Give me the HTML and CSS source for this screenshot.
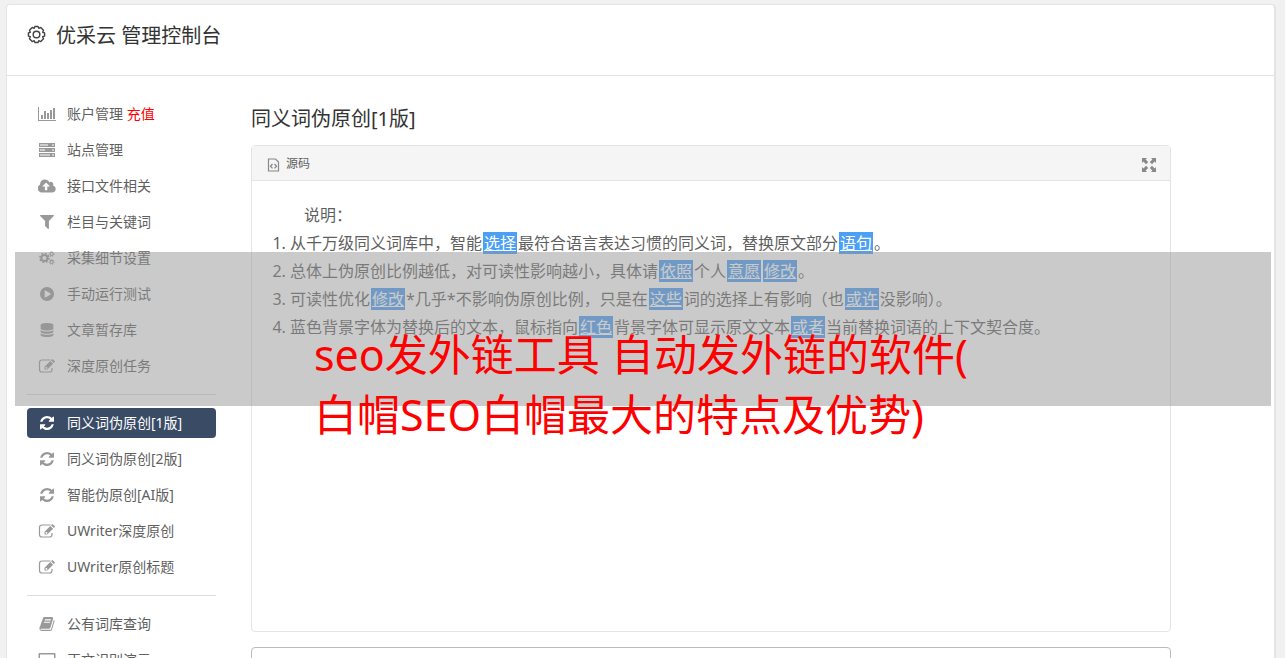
FILE: index.html
```html
<!DOCTYPE html>
<html lang="zh-CN">

<head>
    <meta charset="UTF-8">
    <meta name="viewport" content="width=device-width, initial-scale=1.0">
    <title>优采云 管理控制台</title>
    <link rel="stylesheet" href="styles.css">
</head>

<body>
    <!-- 图标 -->
    <svg class="sprite" aria-hidden="true">
        <symbol id="i-gear" viewBox="0 0 20 20">
            <path d="M8.300 1.500h3.400l.7 2 2.100-.9 2.900 2.900-.9 2.100 2 .7v3.400l-2 .7.9 2.100-2.900 2.900-2.100-.9-.7 2H8.300l-.7-2-2.100.9-2.900-2.900.9-2.100-2-.7V8.300l2-.7-.9-2.100 2.900-2.900 2.100.9z" fill="none" stroke="currentColor" stroke-width="1.500" stroke-linejoin="round"/>
            <circle cx="10" cy="10" r="3.500" fill="none" stroke="currentColor" stroke-width="1.500"/>
        </symbol>
        <symbol id="i-chart" viewBox="0 0 18 14">
            <path d="M0 0h1v13h17v1H0zM3 8h2v4H3zM6 4h2v8H6zM9 6h2v6H9zM12 3h2v9h-2zM15 1h2v11h-2z"/>
        </symbol>
        <symbol id="i-server" viewBox="0 0 18 14">
            <path fill-rule="evenodd" d="M1 0h16v4H1zM1 5h16v4H1zM1 10h16v4H1zM2 1.500v1h8v-1zM2 6.500v1h5v-1zM2 11.500v1h10v-1zM14 1.500v1h2v-1zM14 6.500v1h2v-1zM14 11.500v1h2v-1z"/>
        </symbol>
        <symbol id="i-cloud" viewBox="-32 0 1920 1408">
            <path d="M1216 736q0-14-9-23l-352-352q-9-9-23-9t-23 9l-351 351q-10 12-10 24 0 14 9 23t23 9h224v352q0 13 9.500 22.500t22.500 9.500h192q13 0 22.500-9.500t9.500-22.500v-352h224q13 0 22.500-9.500t9.500-22.500zm640 288q0 159-112.500 271.500t-271.500 112.500h-1088q-185 0-316.500-131.500t-131.500-316.500q0-130 70-240t188-165q-2-30-2-43 0-212 150-362t362-150q156 0 285.500 87t188.500 231q71-62 166-62 106 0 181 75t75 181q0 76-41 138 130 31 213.500 135.500t83.500 238.500z"/>
        </symbol>
        <symbol id="i-filter" viewBox="0 0 1408 1408">
            <path d="M1403 39q17 41-14 70l-493 493v742q0 42-39 59-13 5-25 5-27 0-45-19l-256-256q-19-19-19-45v-486l-493-493q-31-29-14-70 17-39 59-39h1280q42 0 59 39z"/>
        </symbol>
        <symbol id="i-cogs" viewBox="0 0 18 16">
            <g fill="none" stroke="currentColor">
                <circle cx="6" cy="8" r="3.500" stroke-width="2.400"/>
                <circle cx="6" cy="8" r="5.200" stroke-width="1.800" stroke-dasharray="2.040 2.040"/>
                <circle cx="14.300" cy="3.500" r="1.800" stroke-width="1.200"/>
                <circle cx="14.300" cy="3.500" r="2.800" stroke-width="1" stroke-dasharray="1.260 1.260"/>
                <circle cx="14.300" cy="12.500" r="1.800" stroke-width="1.200"/>
                <circle cx="14.300" cy="12.500" r="2.800" stroke-width="1" stroke-dasharray="1.260 1.260"/>
            </g>
        </symbol>
        <symbol id="i-play" viewBox="0 0 1536 1536">
            <path d="M768 0q209 0 385.500 103t279.500 279.500 103 385.500-103 385.500-279.500 279.500-385.500 103-385.500-103-279.500-279.500-103-385.500 103-385.500 279.500-279.500 385.500-103zm384 823q32-18 32-55t-32-55l-544-320q-31-19-64-1-32 19-32 56v640q0 37 32 56 16 8 32 8 17 0 32-9z"/>
        </symbol>
        <symbol id="i-database" viewBox="0 0 1536 1664">
            <path d="M768 640q237 0 443-43t325-127v170q0 69-103 128t-280 93.500-385 34.500-385-34.500-280-93.500-103-128v-170q119 84 325 127t443 43zm0 768q237 0 443-43t325-127v170q0 69-103 128t-280 93.500-385 34.500-385-34.500-280-93.500-103-128v-170q119 84 325 127t443 43zm0-384q237 0 443-43t325-127v170q0 69-103 128t-280 93.500-385 34.500-385-34.500-280-93.500-103-128v-170q119 84 325 127t443 43zm0-1024q208 0 385 34.500t280 93.500 103 128v128q0 69-103 128t-280 93.500-385 34.500-385-34.500-280-93.500-103-128v-128q0-69 103-128t280-93.500 385-34.500z"/>
        </symbol>
        <symbol id="i-edit" viewBox="0 0 18 14">
            <path d="M12.500 1H4Q1.500 1 1.500 3.500v7Q1.500 13 4 13h7.500q2.500 0 2.500-2.500V9" fill="none" stroke="currentColor" stroke-width="1.200"/>
            <path fill-rule="evenodd" d="M6.500 10.500V7.700L12.300 1.900l2.800 2.800-5.800 5.800zM7.400 8.500v.7h.7v.7h.7l.8-.8-1.400-1.400zM13 1.200l.8-.8q.6-.6 1.200 0l1.600 1.600q.6.600 0 1.200l-.8.8z"/>
        </symbol>
        <symbol id="i-refresh" viewBox="0 0 1536 1536">
            <path d="M1511 928q0 5-1 7-64 268-268 434.500t-478 166.500q-146 0-282.500-55t-243.500-157l-129 129q-19 19-45 19t-45-19-19-45v-448q0-26 19-45t45-19h448q26 0 45 19t19 45-19 45l-137 137q71 66 161 102t187 36q134 0 250-65t186-179q11-17 53-117 8-23 30-23h192q13 0 22.500 9.500t9.500 22.500zm25-800v448q0 26-19 45t-45 19h-448q-26 0-45-19t-19-45 19-45l138-138q-148-137-349-137-134 0-250 65t-186 179q-11 17-53 117-8 23-30 23h-199q-13 0-22.500-9.500t-9.500-22.500v-7q65-268 270-434.500t480-166.500q146 0 284 55.500t245 156.500l130-129q19-19 45-19t45 19 19 45z"/>
        </symbol>
        <symbol id="i-book" viewBox="0 128 1664 1536">
            <path d="M1639 478q40 57 18 129l-275 906q-19 64-76.500 107.500t-122.500 43.500h-923q-77 0-148.500-53.500t-99.500-131.500q-24-67-2-127 0-4 3-27t4-37q1-8-3-21.500t-3-19.500q2-11 8-21t16.500-23.500 16.500-23.500q23-38 45-91.500t30-91.500q3-10 .5-30t-.5-28q3-11 17-28t17-23q21-36 42-92t25-90q1-9-2.500-32t.5-28q4-13 22-30.500t22-22.500q19-26 42.500-84.500t27.500-96.500q1-8-3-25.500t-2-26.500q2-8 9-18t18-23 17-21q8-12 16.500-30.500t15-35 16-36 19.500-32 26.500-23.500 36-11.500 47.500 5.500l-1 3q38-9 51-9h761q74 0 114 56t18 130l-274 906q-36 119-71.500 153.500t-128.500 34.500h-869q-27 0-38 15-11 16-1 43 24 70 144 70h923q29 0 56-15.500t35-41.500l300-987q7-22 5-57 38 15 59 43zm-1064 2q-4 13 2 22.500t20 9.500h608q13 0 25.500-9.500t16.500-22.500l21-64q4-13-2-22.500t-20-9.500h-608q-13 0-25.500 9.500t-16.500 22.500zm-83 256q-4 13 2 22.500t20 9.500h608q13 0 25.500-9.500t16.500-22.500l21-64q4-13-2-22.500t-20-9.500h-608q-13 0-25.500 9.500t-16.500 22.500z"/>
        </symbol>
        <symbol id="i-laptop" viewBox="0 0 18 14">
            <path fill-rule="evenodd" d="M1.500 0h15q1 0 1 1v10q0 1-1 1h-15q-1 0-1-1V1q0-1 1-1zM2 1.400v9h14v-9zM0 13h18v1H0z"/>
        </symbol>
        <symbol id="i-source" viewBox="0 0 12 14">
            <path d="M1 1h7l3 3v9H1z" fill="none" stroke="currentColor" stroke-width="1.200"/>
            <path d="M5 6L3 8.200 5 10.400M7 6l2 2.200-2 2.200" fill="none" stroke="currentColor" stroke-width="1.300"/>
        </symbol>
        <symbol id="i-expand" viewBox="0 0 14 14">
            <path d="M0 0h5L3.600 1.400 6.200 4 4 6.200 1.400 3.600 0 5zM14 0v5l-1.400-1.400L10 6.200 7.800 4l2.600-2.600L9 0zM0 14V9l1.400 1.400L4 7.800 6.200 10l-2.600 2.600L5 14zM14 14H9l1.400-1.400L7.800 10 10 7.800l2.600 2.600L14 9z"/>
        </symbol>
    </svg>

    <div class="container">
        <header class="header">
            <svg class="icon icon-gear"><use href="#i-gear"/></svg>
            <h1>优采云 管理控制台</h1>
        </header>

        <div class="content">
            <nav class="sidebar">
                <ul>
                    <li><a href="#"><svg class="icon"><use href="#i-chart"/></svg>账户管理 <span class="recharge">充值</span></a></li>
                    <li><a href="#"><svg class="icon"><use href="#i-server"/></svg>站点管理</a></li>
                    <li><a href="#"><svg class="icon"><use href="#i-cloud"/></svg>接口文件相关</a></li>
                    <li><a href="#"><svg class="icon"><use href="#i-filter"/></svg>栏目与关键词</a></li>
                    <li><a href="#"><svg class="icon"><use href="#i-cogs"/></svg>采集细节设置</a></li>
                    <li><a href="#"><svg class="icon"><use href="#i-play"/></svg>手动运行测试</a></li>
                    <li><a href="#"><svg class="icon"><use href="#i-database"/></svg>文章暂存库</a></li>
                    <li><a href="#"><svg class="icon"><use href="#i-edit"/></svg>深度原创任务</a></li>
                </ul>
                <ul>
                    <li><a href="#" class="active"><svg class="icon"><use href="#i-refresh"/></svg>同义词伪原创[1版]</a></li>
                    <li><a href="#"><svg class="icon"><use href="#i-refresh"/></svg>同义词伪原创[2版]</a></li>
                    <li><a href="#"><svg class="icon"><use href="#i-refresh"/></svg>智能伪原创[AI版]</a></li>
                    <li><a href="#"><svg class="icon"><use href="#i-edit"/></svg>UWriter深度原创</a></li>
                    <li><a href="#"><svg class="icon"><use href="#i-edit"/></svg>UWriter原创标题</a></li>
                </ul>
                <ul>
                    <li><a href="#"><svg class="icon"><use href="#i-book"/></svg>公有词库查询</a></li>
                    <li><a href="#"><svg class="icon"><use href="#i-laptop"/></svg>正文识别演示</a></li>
                </ul>
            </nav>

            <main class="main">
                <h2>同义词伪原创[1版]</h2>
                <div class="editor">
                    <div class="toolbar">
                        <button type="button"><svg class="icon-source"><use href="#i-source"/></svg>源码</button>
                        <button type="button" aria-label="全屏"><svg class="icon-expand"><use href="#i-expand"/></svg></button>
                    </div>
                    <div class="editor-body">
                        <p>说明：</p>
                        <ol>
                            <li>从千万级同义词库中，智能<mark>选择</mark>最符合语言表达习惯的同义词，替换原文部分<mark>语句</mark>。</li>
                            <li>总体上伪原创比例越低，对可读性影响越小，具体请<mark>依照</mark>个人<mark>意愿</mark><mark>修改</mark>。</li>
                            <li>可读性优化<mark>修改</mark>*几乎*不影响伪原创比例，只是在<mark>这些</mark>词的选择上有影响（也<mark>或许</mark>没影响）。</li>
                            <li>蓝色背景字体为替换后的文本，鼠标指向<mark>红色</mark>背景字体可显示原文文本<mark>或者</mark>当前替换词语的上下文契合度。</li>
                        </ol>
                    </div>
                </div>
                <textarea class="result" aria-label="结果"></textarea>
            </main>
        </div>
    </div>

    <div class="banner">
        <p>seo发外链工具 自动发外链的软件(<br>白帽SEO白帽最大的特点及优势)</p>
    </div>
</body>

</html>
```
FILE: styles.css
```css
* {
    box-sizing: border-box;
}

body {
    position: relative;
    height: 100vh;
    margin: 0;
    padding: 4px 9px 0 6px;
    overflow: hidden;
    font-family: "Noto Sans", "Noto Sans CJK SC", sans-serif;
    font-size: 14px;
    color: #5f5f5f;
    background-color: #f1f1f1;
}

h1,
h2,
p,
ul,
ol {
    margin: 0;
    padding: 0;
    font-weight: normal;
}

button {
    display: flex;
    align-items: center;
    gap: 6px;
    padding: 0;
    border: none;
    background: none;
    font: inherit;
    color: inherit;
    cursor: pointer;
}

.sprite {
    display: none;
}

.container {
    background-color: #fff;
    border: 1px solid #e4e4e4;
    border-right-width: 2px;
    border-radius: 4px;
}

.header {
    display: flex;
    align-items: center;
    gap: 10px;
    height: 71px;
    padding: 0 20px 8px;
    border-bottom: 1px solid #e4e4e4;
    color: #333;
}

.header h1,
.main h2 {
    font-size: 20px;
    line-height: 30px;
    color: #333;
}

.icon {
    width: 18px;
    height: 14px;
    flex: none;
    fill: currentColor;
    color: #999;
}

.icon-gear {
    width: 19px;
    height: 19px;
    margin-bottom: 4px;
    color: #444;
}

.content {
    display: flex;
    align-items: flex-start;
    gap: 35px;
    padding: 23px 103px 20px 20px;
}

.sidebar {
    width: 189px;
    flex: none;
}

.sidebar ul {
    display: flex;
    flex-direction: column;
    gap: 6px;
    list-style: none;
}

.sidebar ul + ul {
    margin-top: 13px;
    padding-top: 13px;
    border-top: 1px solid #ddd;
}

.sidebar a {
    display: flex;
    align-items: center;
    height: 30px;
    padding: 0 0 2px 11px;
    border-radius: 4px;
    color: #5f5f5f;
    text-decoration: none;
    white-space: pre;
}

.sidebar .icon {
    margin: 2px 11px 0 0;
}

.sidebar .active,
.sidebar .active .icon {
    color: #fff;
}

.sidebar .active {
    background-color: #3a4b66;
}

.sidebar .recharge {
    color: #f00;
}

.main {
    flex: 1;
    padding-top: 5px;
}

.editor {
    height: 487px;
    margin: 11px 0 15px;
    border: 1px solid #e4e4e4;
    border-radius: 4px;
}

.toolbar {
    display: flex;
    align-items: center;
    justify-content: space-between;
    height: 35px;
    padding: 0 14px 0 15px;
    border-bottom: 1px solid #e4e4e4;
    background-color: #f5f5f5;
    font-size: 12px;
}

.icon-source {
    width: 13px;
    height: 14px;
    margin-top: 3px;
    color: #888;
}

.icon-expand {
    width: 14px;
    height: 14px;
    margin-top: 3px;
    fill: #888;
}

.editor-body {
    padding: 20px;
    font-size: 16px;
    line-height: 28px;
}

.editor-body p {
    text-indent: 2em;
}

.editor-body ol {
    padding-left: 18px;
}

mark {
    margin: 0 1px;
    padding: 0 1px;
    background-color: #4b9ff5;
    color: #fff;
    text-decoration: underline;
}

.result {
    display: block;
    width: 100%;
    height: 120px;
    border: 1px solid #bbb;
    border-radius: 4px;
    resize: none;
}

/* 覆盖在页面上的半透明标题条 */
.banner {
    position: absolute;
    top: 252px;
    left: 15px;
    right: 14px;
    height: 154px;
    padding: 73px 0 0 299px;
    background-color: rgba(150, 150, 150, 0.5);
}

.banner p {
    font-size: 43px;
    line-height: 60px;
    color: #f00;
    white-space: nowrap;
}
```
